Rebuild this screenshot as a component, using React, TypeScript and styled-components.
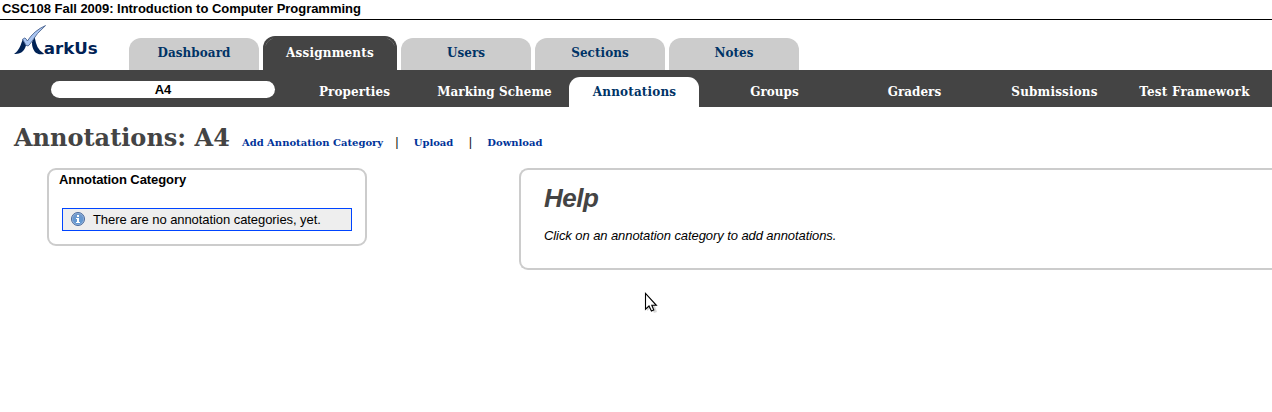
import React from "react";
import styled, { createGlobalStyle, css } from "styled-components";

const Global = createGlobalStyle`
  html, body { margin: 0; padding: 0; background: #fff; overflow: hidden; }
  body { font: 13px/15px "Liberation Sans", Arial, sans-serif; color: #000; }
  a { text-decoration: none; }
`;

const serif = `"DejaVu Serif Condensed", "DejaVu Serif", serif`;

const Page = styled.div`
  position: relative;
  width: 1272px;
  height: 412px;
  overflow: hidden;
`;

const CourseBar = styled.div`
  box-sizing: border-box;
  height: 20px;
  padding: 1px 2px 0;
  border-bottom: 1px solid #000;
  font-weight: bold;
  letter-spacing: -0.03px;
`;

const Header = styled.header`
  display: flex;
  align-items: flex-end;
  height: 50px;
`;

const LogoLink = styled.a`
  width: 129px;
  height: 50px;
`;

const Logo = styled.svg`
  display: block;
`;

const MainNav = styled.nav`
  display: flex;
  align-items: flex-end;
  gap: 4px;
`;

const MainTab = styled.a<{ $active?: boolean }>`
  width: 130px;
  height: 32px;
  border-radius: 12px 12px 0 0;
  background: #ccc;
  color: #036;
  font: bold 13.3px/30px ${serif};
  font-stretch: condensed;
  letter-spacing: 0.06px;
  text-align: center;
  ${(p) =>
    p.$active &&
    css`
      border: 2px solid #444;
      border-bottom: 0;
      background:
        radial-gradient(circle at 10px 10px, transparent 9px, #777 9.6px, transparent 10.2px) 0 0 / 8px 8px no-repeat,
        radial-gradient(circle at -2px 10px, transparent 9px, #777 9.6px, transparent 10.2px) 100% 0 / 8px 8px no-repeat,
        #444;
      color: #fff;
      letter-spacing: 0.22px;
    `}
`;

const SubNav = styled.nav`
  display: flex;
  align-items: flex-end;
  gap: 10px;
  height: 37px;
  padding-left: 51px;
  background: #444;
`;

const Current = styled.div`
  align-self: flex-start;
  width: 224px;
  height: 17px;
  margin: 11px 4px 0 0;
  border-radius: 9px;
  background: #fff;
  font-weight: bold;
  line-height: 18px;
  text-align: center;
`;

const SubTab = styled.a<{ $active?: boolean; $tracking: number }>`
  width: 130px;
  height: 30px;
  border-radius: 11px 11px 0 0;
  background: ${(p) => (p.$active ? "#fff" : "transparent")};
  color: ${(p) => (p.$active ? "#036" : "#fff")};
  font: bold 13.3px/30px ${serif};
  font-stretch: condensed;
  letter-spacing: ${(p) => p.$tracking}px;
  text-indent: 1px;
  text-align: center;
  white-space: nowrap;
`;

const TitleBar = styled.div`
  box-sizing: border-box;
  display: flex;
  align-items: baseline;
  height: 61px;
  padding: 16px 0 0 14px;
`;

const Title = styled.h1`
  margin: 0 12px 0 0;
  color: #444;
  font: bold 24px/30px "DejaVu Serif", serif;
`;

const Action = styled.a`
  color: #039;
  font: bold 10px/15px "DejaVu Serif", serif;
`;

const Divider = styled.span<{ $before: number }>`
  padding: 0 15.5px 0 ${(p) => p.$before}px;
  width: 3px;
  color: #222;
  text-align: center;
`;

const Columns = styled.main`
  display: flex;
  align-items: flex-start;
  gap: 152px;
  padding-left: 47px;
`;

const Panel = styled.section`
  box-sizing: border-box;
  flex: none;
  width: 320px;
  height: 78px;
  padding: 2px 13px 0;
  border: 2px solid #ccc;
  border-radius: 9px;
`;

const PanelTitle = styled.h3`
  margin: 0 0 21px -3px;
  font: inherit;
  font-weight: bold;
  letter-spacing: -0.08px;
`;

const Notice = styled.div`
  box-sizing: border-box;
  display: flex;
  align-items: center;
  gap: 8px;
  height: 23px;
  padding-left: 8px;
  border: 1px solid #04f;
  background: #eee;
  letter-spacing: -0.07px;
`;

const HelpPanel = styled(Panel)`
  flex: 1;
  height: 102px;
  padding: 13px 23px 0;
  border-right: 0;
  border-radius: 9px 0 0 9px;
  font-style: italic;
`;

const HelpTitle = styled.h2`
  margin: 0 0 15px;
  color: #444;
  font-size: 26px;
  line-height: 30px;
  letter-spacing: -0.45px;
`;

const HelpText = styled.p`
  margin: 0;
  letter-spacing: -0.08px;
`;

const Pointer = styled.svg`
  position: absolute;
  left: 644px;
  top: 291px;
`;

const Info = styled.svg`
  margin-bottom: 2px;
`;

const mainTabs = ["Dashboard", "Assignments", "Users", "Sections", "Notes"];
const subTabs = [
  { label: "Properties", tracking: 0.1 },
  { label: "Marking Scheme", tracking: 0.05 },
  { label: "Annotations", tracking: 0.18 },
  { label: "Groups", tracking: 0 },
  { label: "Graders", tracking: 0 },
  { label: "Submissions", tracking: 0.18 },
  { label: "Test Framework", tracking: 0.25 },
];

const MarkUsLogo = () => (
  <Logo width="129" height="50" viewBox="0 20 129 50">
    <path d="M14 53.8 Q18 51.5 20.5 45.5 L23 38.5 L26 45.5 Q24.5 50.5 21.3 52.5 Q18.5 54.2 14 53.8Z" fill="#025" />
    <path d="M32 42 L34.6 37 L36 43 Q37.3 48 40 50.5 L44.3 54 Q37.5 55.3 34.6 51.5 Q31.8 47.5 32 42Z" fill="#025" />
    <path
      d="M22.6 39.4 Q25.2 36.6 26.3 39.2 L27.4 41 Q34 30.5 45.5 25.6 Q37 32.5 30.2 43.8 Q28 47.4 26.2 45.4Z"
      fill="#a9c5f2"
      stroke="#4a6390"
      strokeWidth="0.9"
      strokeLinejoin="round"
    />
    <text x="43.7" y="54" fill="#025" fontFamily="DejaVu Sans" fontWeight="bold" fontSize="16.7">
      arkUs
    </text>
  </Logo>
);

const InfoIcon = () => (
  <Info width="14" height="14" viewBox="0 0 14 14">
    <defs>
      <linearGradient id="info" x1="0" y1="0" x2="0" y2="1">
        <stop offset="0" stopColor="#6f98cb" />
        <stop offset="1" stopColor="#5f98d4" />
      </linearGradient>
    </defs>
    <circle cx="7" cy="7" r="6.5" fill="#9dbbe0" stroke="#48689b" />
    <circle cx="7" cy="7" r="5.4" fill="url(#info)" />
    <path d="M6 3h2v2H6zM5 6H8v4h1v1H5v-1h1V7H5z" fill="#fff" />
  </Info>
);

export default function App() {
  return (
    <Page>
      <Global />
      <CourseBar>CSC108 Fall 2009: Introduction to Computer Programming</CourseBar>
      <Header>
        <LogoLink>
          <MarkUsLogo />
        </LogoLink>
        <MainNav>
          {mainTabs.map((t) => (
            <MainTab key={t} $active={t === "Assignments"}>
              {t}
            </MainTab>
          ))}
        </MainNav>
      </Header>
      <SubNav>
        <Current>A4</Current>
        {subTabs.map(({ label, tracking }) => (
          <SubTab key={label} $active={label === "Annotations"} $tracking={tracking}>
            {label}
          </SubTab>
        ))}
      </SubNav>
      <TitleBar>
        <Title>Annotations: A4</Title>
        <Action>Add Annotation Category</Action>
        <Divider $before={12}>|</Divider>
        <Action>Upload</Action>
        <Divider $before={15.5}>|</Divider>
        <Action>Download</Action>
      </TitleBar>
      <Columns>
        <Panel>
          <PanelTitle>Annotation Category</PanelTitle>
          <Notice>
            <InfoIcon />
            There are no annotation categories, yet.
          </Notice>
        </Panel>
        <HelpPanel>
          <HelpTitle>Help</HelpTitle>
          <HelpText>Click on an annotation category to add annotations.</HelpText>
        </HelpPanel>
      </Columns>
      <Pointer width="16" height="23" viewBox="0 0 16 23">
        <path d="M3 4v16l4-3 3 5 3-1-2-6h3z" fill="#000" opacity=".15" />
        <path
          d="M1.5 2.5V18.2L5 15L7.4 20L9.8 19L7.8 14.3H12.3Z"
          fill="#fff"
          stroke="#000"
          strokeWidth="1.1"
        />
      </Pointer>
    </Page>
  );
}
